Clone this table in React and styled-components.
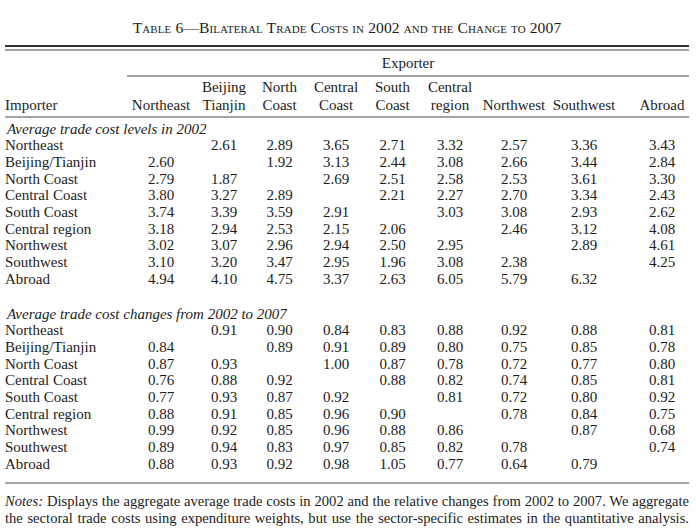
import React from "react";
import styled, { createGlobalStyle } from "styled-components";

const Global = createGlobalStyle`
  html, body { margin: 0; padding: 0; background: #fff; }
  body { font-family: "Liberation Serif", "Times New Roman", serif; color: #1c1c1c; }
`;

const Page = styled.div`
  width: 684px;
  padding: 19px 7px 0 5px;
`;

const Title = styled.h1`
  margin: 0;
  font-size: 15.6px;
  font-weight: normal;
  font-variant: small-caps;
  line-height: 18px;
  text-align: center;
  letter-spacing: 0.1px;
`;

const TopRule = styled.div`
  margin-top: 8px;
  border-top: 2px solid #333;
  height: 2px;
  border-bottom: 2px solid #a3a3a3;
`;

const Table = styled.table`
  width: 684px;
  border-collapse: collapse;
  table-layout: fixed;
  font-size: 15px;
`;

const ExporterCell = styled.th`
  font-weight: normal;
  text-align: center;
  padding: 3px 0 3px;
  line-height: 18px;
  border-bottom: 2px solid #a3a3a3;
`;

const HeadRow = styled.tr`
  border-bottom: 2px solid #a3a3a3;
`;

const HeadCell = styled.th`
  font-weight: normal;
  vertical-align: bottom;
  text-align: ${(p) => (p.$left ? "left" : "center")};
  padding: 1px 0 2px ${(p) => p.$pad || 0}px;
  line-height: 18px;
  white-space: nowrap;
`;

const SectionCell = styled.td`
  font-style: italic;
  padding: ${(p) => (p.$first ? "2.5px" : "18px")} 0 0 2px;
  line-height: 16.7px;
  white-space: nowrap;
`;

const Label = styled.td`
  padding: 0;
  line-height: 16.7px;
  white-space: nowrap;
`;

const Value = styled.td`
  padding: 0 0 0 ${(p) => p.$pad || 0}px;
  line-height: 16.7px;
  text-align: center;
`;

const BottomRow = styled.tr`
  & > td {
    padding-bottom: 9px;
    border-bottom: 2px solid #a3a3a3;
  }
`;

const Notes = styled.div`
  margin-top: 9px;
  font-size: 14.6px;
  line-height: 17px;
`;

const NoteLine = styled.div`
  text-align: justify;
  text-align-last: justify;
  white-space: nowrap;
  overflow: hidden;
`;

const NoteLabel = styled.span`
  font-style: italic;
`;

const widths = [122, 68, 58, 53, 60, 53, 62, 66, 74, 68];
const lastPad = 14;

const headers = [
  ["", "Northeast"],
  ["Beijing", "Tianjin"],
  ["North", "Coast"],
  ["Central", "Coast"],
  ["South", "Coast"],
  ["Central", "region"],
  ["", "Northwest"],
  ["", "Southwest"],
  ["", "Abroad"],
];

const levels = [
  ["Northeast", "", "2.61", "2.89", "3.65", "2.71", "3.32", "2.57", "3.36", "3.43"],
  ["Beijing/Tianjin", "2.60", "", "1.92", "3.13", "2.44", "3.08", "2.66", "3.44", "2.84"],
  ["North Coast", "2.79", "1.87", "", "2.69", "2.51", "2.58", "2.53", "3.61", "3.30"],
  ["Central Coast", "3.80", "3.27", "2.89", "", "2.21", "2.27", "2.70", "3.34", "2.43"],
  ["South Coast", "3.74", "3.39", "3.59", "2.91", "", "3.03", "3.08", "2.93", "2.62"],
  ["Central region", "3.18", "2.94", "2.53", "2.15", "2.06", "", "2.46", "3.12", "4.08"],
  ["Northwest", "3.02", "3.07", "2.96", "2.94", "2.50", "2.95", "", "2.89", "4.61"],
  ["Southwest", "3.10", "3.20", "3.47", "2.95", "1.96", "3.08", "2.38", "", "4.25"],
  ["Abroad", "4.94", "4.10", "4.75", "3.37", "2.63", "6.05", "5.79", "6.32", ""],
];

const changes = [
  ["Northeast", "", "0.91", "0.90", "0.84", "0.83", "0.88", "0.92", "0.88", "0.81"],
  ["Beijing/Tianjin", "0.84", "", "0.89", "0.91", "0.89", "0.80", "0.75", "0.85", "0.78"],
  ["North Coast", "0.87", "0.93", "", "1.00", "0.87", "0.78", "0.72", "0.77", "0.80"],
  ["Central Coast", "0.76", "0.88", "0.92", "", "0.88", "0.82", "0.74", "0.85", "0.81"],
  ["South Coast", "0.77", "0.93", "0.87", "0.92", "", "0.81", "0.72", "0.80", "0.92"],
  ["Central region", "0.88", "0.91", "0.85", "0.96", "0.90", "", "0.78", "0.84", "0.75"],
  ["Northwest", "0.99", "0.92", "0.85", "0.96", "0.88", "0.86", "", "0.87", "0.68"],
  ["Southwest", "0.89", "0.94", "0.83", "0.97", "0.85", "0.82", "0.78", "", "0.74"],
  ["Abroad", "0.88", "0.93", "0.92", "0.98", "1.05", "0.77", "0.64", "0.79", ""],
];

function DataRow({ row }) {
  return (
    <>
      <Label>{row[0]}</Label>
      {row.slice(1).map((v, i) => (
        <Value key={i} $pad={i === 8 ? lastPad : 0}>
          {v}
        </Value>
      ))}
    </>
  );
}

function Section({ title, rows, first, last }) {
  return (
    <>
      <tr>
        <SectionCell colSpan={10} $first={first}>
          {title}
        </SectionCell>
      </tr>
      {rows.map((r, i) =>
        last && i === rows.length - 1 ? (
          <BottomRow key={i}>
            <DataRow row={r} />
          </BottomRow>
        ) : (
          <tr key={i}>
            <DataRow row={r} />
          </tr>
        )
      )}
    </>
  );
}

export default function App() {
  return (
    <Page>
      <Global />
      <Title>Table 6—Bilateral Trade Costs in 2002 and the Change to 2007</Title>
      <TopRule />
      <Table>
        <colgroup>
          {widths.map((w, i) => (
            <col key={i} style={{ width: w }} />
          ))}
        </colgroup>
        <thead>
          <tr>
            <th />
            <ExporterCell colSpan={9}>Exporter</ExporterCell>
          </tr>
          <HeadRow>
            <HeadCell $left>Importer</HeadCell>
            {headers.map((h, i) => (
              <HeadCell key={i} $pad={i === 8 ? lastPad : 0}>
                {h[0]}
                {h[0] && <br />}
                {h[1]}
              </HeadCell>
            ))}
          </HeadRow>
        </thead>
        <tbody>
          <Section title="Average trade cost levels in 2002" rows={levels} first />
          <Section title="Average trade cost changes from 2002 to 2007" rows={changes} last />
        </tbody>
      </Table>
      <Notes>
        <NoteLine>
          <NoteLabel>Notes:</NoteLabel> Displays the aggregate average trade costs in 2002 and the relative changes from 2002 to 2007. We aggregate
        </NoteLine>
        <NoteLine>
          the sectoral trade costs using expenditure weights, but use the sector-specific estimates in the quantitative analysis.
        </NoteLine>
      </Notes>
    </Page>
  );
}
